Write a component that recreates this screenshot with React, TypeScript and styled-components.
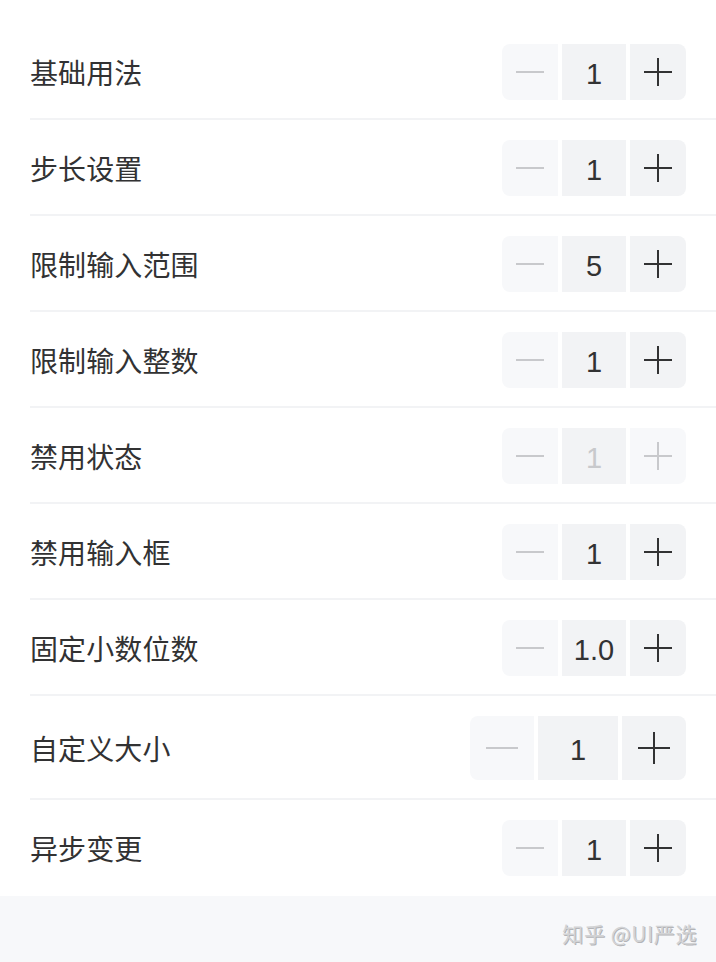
import React, { useState } from 'react';
import styled, { createGlobalStyle, css } from 'styled-components';

const GlobalStyle = createGlobalStyle`
  html, body {
    margin: 0;
    padding: 0;
    background: #f7f8fa;
    font-family: "Noto Sans CJK SC", "Noto Sans", sans-serif;
    -webkit-font-smoothing: antialiased;
  }
`;

const Page = styled.div`
  width: 716px;
  min-height: 962px;
  background: #f7f8fa;
  display: flex;
  flex-direction: column;
`;

const Group = styled.div`
  background: #fff;
  padding-top: 24px;
`;

const Cell = styled.div<{ $large?: boolean }>`
  position: relative;
  display: flex;
  align-items: center;
  justify-content: space-between;
  height: ${p => (p.$large ? 104 : 96)}px;
  padding: 0 30px 0 30px;
  box-sizing: border-box;

  &:not(:last-child)::after {
    content: '';
    position: absolute;
    left: 30px;
    right: 0;
    bottom: 0;
    height: 2px;
    background: #f2f3f5;
  }
`;

const Label = styled.span`
  font-size: 28px;
  color: #323233;
  line-height: 40px;
  letter-spacing: 0.1px;
`;

const Stepper = styled.div`
  display: flex;
  align-items: stretch;
  gap: 4px;
`;

const StepButton = styled.button<{ $size: number; $off: boolean; $side: 'left' | 'right' }>`
  position: relative;
  width: ${p => p.$size}px;
  height: ${p => p.$size}px;
  border: none;
  padding: 0;
  margin: 0;
  cursor: ${p => (p.$off ? 'not-allowed' : 'pointer')};
  background: ${p => (p.$off ? '#f7f8fa' : '#f2f3f5')};
  color: ${p => (p.$off ? '#c8c9cc' : '#323233')};
  border-radius: ${p => (p.$side === 'left' ? '8px 0 0 8px' : '0 8px 8px 0')};

  &::before,
  &::after {
    content: '';
    position: absolute;
    top: 50%;
    left: 50%;
    background: currentColor;
    transform: translate(-50%, -50%);
  }
  &::before {
    width: 50%;
    height: 2px;
  }
  ${p =>
    p.$side === 'right'
      ? css`
          &::after {
            width: 2px;
            height: 50%;
          }
        `
      : css`
          &::after {
            display: none;
          }
        `}
`;

const ValueInput = styled.input<{ $width: number; $height: number; $dim: boolean }>`
  width: ${p => p.$width}px;
  height: ${p => p.$height}px;
  box-sizing: border-box;
  border: none;
  margin: 0;
  padding: 4px 0 0;
  outline: none;
  text-align: center;
  background: #f2f3f5;
  font-family: "Liberation Sans", "Noto Sans", sans-serif;
  font-size: 29px;
  color: ${p => (p.$dim ? '#c8c9cc' : '#323233')};
  -webkit-text-fill-color: ${p => (p.$dim ? '#c8c9cc' : '#323233')};
  opacity: 1;
`;

const Footer = styled.div`
  flex: 1;
  display: flex;
  justify-content: flex-end;
  align-items: flex-end;
  padding: 0 19px 17px 0;
`;

const Watermark = styled.span`
  font-size: 21px;
  line-height: 24px;
  color: #d2d3d5;
  letter-spacing: 0.6px;
  text-shadow: 1px 1px 0 #b3b4b7;
`;

type StepperProps = {
  initial: number;
  step?: number;
  min?: number;
  max?: number;
  decimals?: number;
  disabled?: boolean;
  readOnly?: boolean;
  buttonSize?: number;
  inputWidth?: number;
};

function NumberStepper({
  initial,
  step = 1,
  min = 1,
  max = Infinity,
  decimals,
  disabled = false,
  readOnly = false,
  buttonSize = 56,
  inputWidth = 64,
}: StepperProps) {
  const [value, setValue] = useState(initial);
  const minusOff = disabled || value <= min;
  const plusOff = disabled || value >= max;
  const shown = decimals !== undefined ? value.toFixed(decimals) : String(value);

  const change = (delta: number) => {
    const next = Math.min(max, Math.max(min, +(value + delta).toFixed(4)));
    setValue(next);
  };

  return (
    <Stepper>
      <StepButton
        $side="left"
        $size={buttonSize}
        $off={minusOff}
        aria-label="减少"
        onClick={() => !minusOff && change(-step)}
      />
      <ValueInput
        $width={inputWidth}
        $height={buttonSize}
        $dim={disabled}
        value={shown}
        disabled={disabled}
        readOnly={readOnly}
        inputMode="decimal"
        onChange={e => {
          const n = parseFloat(e.target.value);
          if (!Number.isNaN(n)) setValue(n);
        }}
      />
      <StepButton
        $side="right"
        $size={buttonSize}
        $off={plusOff}
        aria-label="增加"
        onClick={() => !plusOff && change(step)}
      />
    </Stepper>
  );
}

export default function App() {
  return (
    <Page>
      <GlobalStyle />
      <Group>
        <Cell>
          <Label>基础用法</Label>
          <NumberStepper initial={1} />
        </Cell>
        <Cell>
          <Label>步长设置</Label>
          <NumberStepper initial={1} step={2} />
        </Cell>
        <Cell>
          <Label>限制输入范围</Label>
          <NumberStepper initial={5} min={5} max={8} />
        </Cell>
        <Cell>
          <Label>限制输入整数</Label>
          <NumberStepper initial={1} />
        </Cell>
        <Cell>
          <Label>禁用状态</Label>
          <NumberStepper initial={1} disabled />
        </Cell>
        <Cell>
          <Label>禁用输入框</Label>
          <NumberStepper initial={1} readOnly />
        </Cell>
        <Cell>
          <Label>固定小数位数</Label>
          <NumberStepper initial={1} step={0.2} decimals={1} />
        </Cell>
        <Cell $large>
          <Label>自定义大小</Label>
          <NumberStepper initial={1} buttonSize={64} inputWidth={80} />
        </Cell>
        <Cell>
          <Label>异步变更</Label>
          <NumberStepper initial={1} />
        </Cell>
      </Group>
      <Footer>
        <Watermark>知乎 @UI严选</Watermark>
      </Footer>
    </Page>
  );
}
